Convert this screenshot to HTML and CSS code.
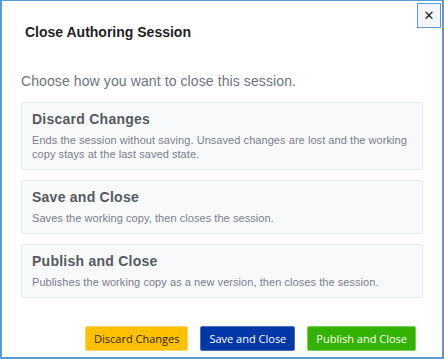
FILE: index.html
```html
<!DOCTYPE html>
<html lang="en">
<head>
  <meta charset="UTF-8" />
  <title>Close Authoring Session</title>
  <link rel="stylesheet" href="styles.css">
</head>
<body>
  <div class="dialog">
    <button class="close-btn" title="Close">&#x2715;</button>
    <h1 class="dialog-title">Close Authoring Session</h1>
    <p class="intro">Choose how you want to close this session.</p>

    <div class="options">
      <div class="option">
        <h2>Discard Changes</h2>
        <p>Ends the session without saving. Unsaved changes are lost and the working copy stays at the last saved state.</p>
      </div>
      <div class="option">
        <h2>Save and Close</h2>
        <p>Saves the working copy, then closes the session.</p>
      </div>
      <div class="option">
        <h2>Publish and Close</h2>
        <p>Publishes the working copy as a new version, then closes the session.</p>
      </div>
    </div>

    <div class="actions">
      <button class="btn btn-discard">Discard Changes</button>
      <button class="btn btn-save">Save and Close</button>
      <button class="btn btn-publish">Publish and Close</button>
    </div>
  </div>
</body>
</html>
```

FILE: styles.css
```css
body {
  margin: 0;
  font-family: 'Liberation Sans', Arial, sans-serif;
  background: #fff;
}
.dialog {
  position: relative;
  box-sizing: border-box;
  width: 444px;
  height: 359px;
  border: 2px solid #5b9bd5;
  border-top-width: 1px;
  background: #fff;
  padding: 0 19px 0 19px;
}
.close-btn {
  position: absolute;
  top: 2px;
  right: 1px;
  width: 24px;
  height: 25px;
  padding: 0;
  border: 1px solid #5b9bd5;
  background: #f3f5f8;
  color: #222;
  font-family: 'DejaVu Sans', sans-serif;
  font-size: 13px;
  font-weight: bold;
  line-height: 22px;
  cursor: pointer;
}
.dialog-title {
  margin: 21px 0 0 4px;
  font-size: 14px;
  line-height: 20px;
  font-weight: bold;
  color: #1f1f1f;
}
.intro {
  margin: 30px 0 12px 0;
  font-size: 14px;
  line-height: 18px;
  color: #6b7480;
  letter-spacing: 0.1px;
}
.options {
  display: flex;
  flex-direction: column;
  gap: 10px;
}
.option {
  background: #f8f9fb;
  border: 1px solid #e5e8ec;
  border-radius: 3px;
  padding: 7px 10px 8px 10px;
}
.option h2 {
  margin: 0 0 5px 0;
  font-size: 14px;
  line-height: 18px;
  font-weight: bold;
  color: #555a60;
  letter-spacing: 0.25px;
}
.option p {
  margin: 0;
  font-size: 11px;
  line-height: 14px;
  color: #7a808a;
  letter-spacing: 0.06px;
}
.actions {
  display: flex;
  justify-content: flex-end;
  gap: 12px;
  margin-top: 28px;
  padding-right: 7px;
}
.btn {
  height: 25px;
  padding: 0 8px;
  border: 1px solid transparent;
  border-radius: 2px;
  font-family: 'Open Sans', sans-serif;
  font-size: 11px;
  cursor: pointer;
}
.btn-discard {
  background: #ffc000;
  border-color: #f5d36b;
  color: #2b2200;
}
.btn-save {
  background: #0038a8;
  border-color: #4a6fc0;
  color: #fff;
}
.btn-publish {
  background: #33b300;
  border-color: #7acd55;
  color: #fff;
}
```
